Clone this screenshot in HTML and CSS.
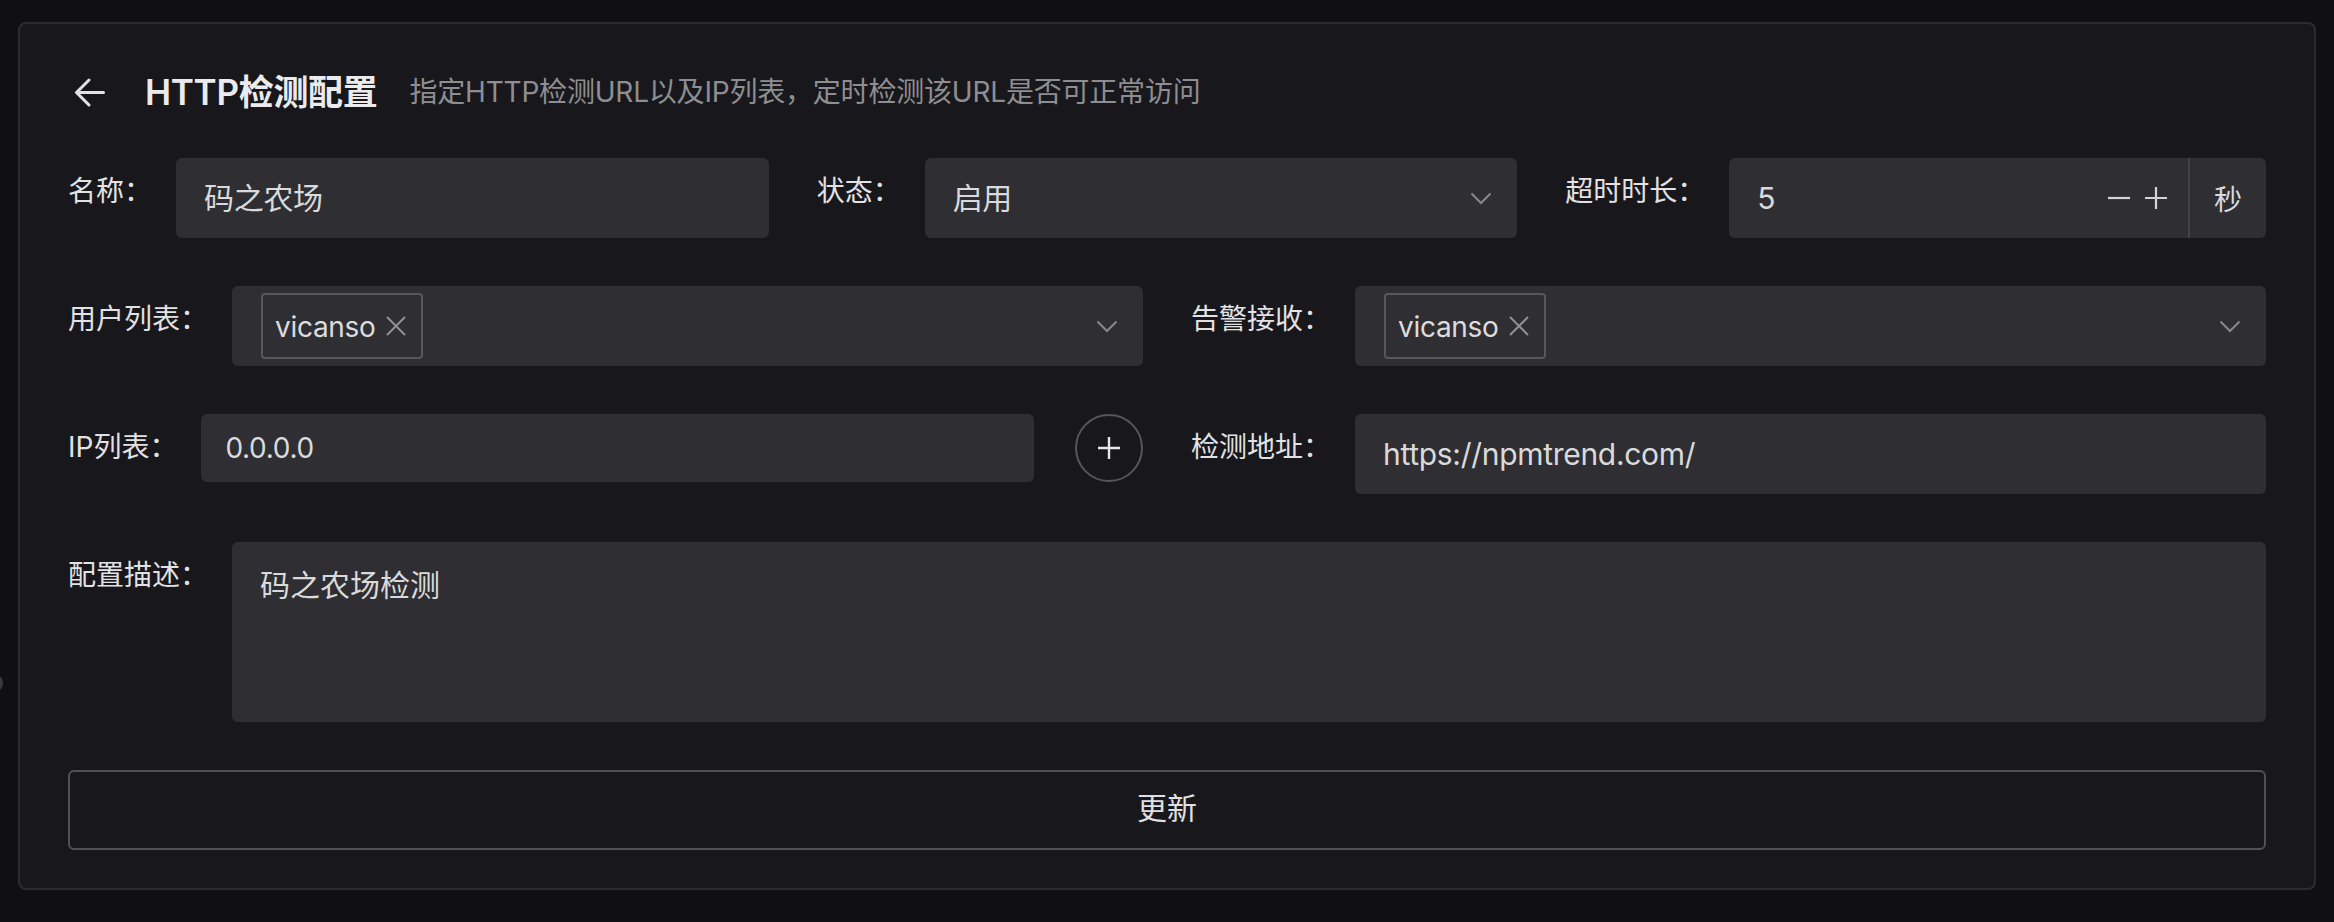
FILE: index.html
```html
<!DOCTYPE html>
<html lang="zh-CN">
<head>
<meta charset="utf-8">
<title>HTTP检测配置</title>
<link rel="stylesheet" href="styles.css">
</head>
<body>
<div class="page">
  <span class="edge-handle"></span>
  <section class="card">
    <header class="page-header">
      <span class="back">
        <svg width="31" height="29" viewBox="0 0 31 29"><path d="M29.5 14.5H2.5M15 2L2.5 14.5L15 27" fill="none" stroke="#e2e2e4" stroke-width="3" stroke-linecap="round" stroke-linejoin="round"/></svg>
      </span>
      <h1 class="title">HTTP检测配置</h1>
      <p class="subtitle">指定HTTP检测URL以及IP列表，定时检测该URL是否可正常访问</p>
    </header>

    <form class="form">
      <div class="row cols-3">
        <div class="item">
          <label class="label">名称：</label>
          <div class="control"><div class="input">码之农场</div></div>
        </div>
        <div class="item">
          <label class="label">状态：</label>
          <div class="control">
            <div class="input select">
              <span class="value">启用</span>
              <svg class="chevron" width="22" height="13" viewBox="0 0 22 13"><polyline points="1.5,1.5 11,11 20.5,1.5" fill="none" stroke="#88888c" stroke-width="2"/></svg>
            </div>
          </div>
        </div>
        <div class="item">
          <label class="label">超时时长：</label>
          <div class="control">
            <div class="input number">
              <span class="value">5</span>
              <span class="stepper">
                <svg width="22" height="22" viewBox="0 0 22 22"><path d="M0 11H22" stroke="#d4d4d6" stroke-width="2.2"/></svg>
                <svg width="22" height="22" viewBox="0 0 22 22"><path d="M0 11H22M11 0V22" stroke="#d4d4d6" stroke-width="2.2"/></svg>
              </span>
            </div>
            <div class="suffix">秒</div>
          </div>
        </div>
      </div>

      <div class="row cols-2">
        <div class="item">
          <label class="label">用户列表：</label>
          <div class="control">
            <div class="input select multi">
              <span class="tag">vicanso
                <svg width="20" height="20" viewBox="0 0 20 20"><path d="M1 1L19 19M19 1L1 19" stroke="#909094" stroke-width="2"/></svg>
              </span>
              <svg class="chevron" width="22" height="13" viewBox="0 0 22 13"><polyline points="1.5,1.5 11,11 20.5,1.5" fill="none" stroke="#88888c" stroke-width="2"/></svg>
            </div>
          </div>
        </div>
        <div class="item">
          <label class="label">告警接收：</label>
          <div class="control">
            <div class="input select multi">
              <span class="tag">vicanso
                <svg width="20" height="20" viewBox="0 0 20 20"><path d="M1 1L19 19M19 1L1 19" stroke="#909094" stroke-width="2"/></svg>
              </span>
              <svg class="chevron" width="22" height="13" viewBox="0 0 22 13"><polyline points="1.5,1.5 11,11 20.5,1.5" fill="none" stroke="#88888c" stroke-width="2"/></svg>
            </div>
          </div>
        </div>
      </div>

      <div class="row cols-2">
        <div class="item">
          <label class="label">IP列表：</label>
          <div class="control">
            <div class="input small">0.0.0.0</div>
            <span class="circle-btn">
              <svg width="22" height="22" viewBox="0 0 22 22"><path d="M0 11H22M11 0V22" stroke="#e6e6e8" stroke-width="2.4"/></svg>
            </span>
          </div>
        </div>
        <div class="item">
          <label class="label">检测地址：</label>
          <div class="control"><div class="input">https://npmtrend.com/</div></div>
        </div>
      </div>

      <div class="row cols-1">
        <div class="item">
          <label class="label">配置描述：</label>
          <div class="control"><div class="textarea">码之农场检测</div></div>
        </div>
      </div>

      <button type="button" class="submit">更新</button>
    </form>
  </section>
</div>
</body>
</html>
```

FILE: styles.css
```css
* {
  box-sizing: border-box;
}

html, body {
  margin: 0;
  background: #101014;
}

body {
  font-family: "Inter", "Noto Sans CJK SC", sans-serif;
  color: #dcdcde;
}

.page {
  position: relative;
  padding: 22px 18px 32px 18px;
}

.edge-handle {
  position: absolute;
  left: -17px;
  top: 673px;
  width: 20px;
  height: 20px;
  border-radius: 50%;
  background: #3a3a3e;
}

.card {
  background: #18181c;
  border: 2px solid #2c2c30;
  border-radius: 8px;
  padding: 40px 48px 38px 48px;
}

/* header */
.page-header {
  display: flex;
  align-items: center;
  height: 56px;
  margin-bottom: 38px;
}

.back {
  flex: none;
  width: 77px;
  padding-left: 6px;
  display: flex;
  align-items: center;
}

.title {
  margin: 0;
  font-size: 35px;
  line-height: 56px;
  font-weight: 600;
  letter-spacing: -0.3px;
  color: #ebebed;
  white-space: nowrap;
}

.subtitle {
  margin: 0 0 0 32px;
  font-size: 28px;
  line-height: 56px;
  letter-spacing: -0.2px;
  color: #8e8e92;
  white-space: nowrap;
}

/* form */
.row {
  display: grid;
  column-gap: 48px;
  margin-bottom: 48px;
}

.cols-3 { grid-template-columns: repeat(3, 1fr); }
.cols-2 { grid-template-columns: repeat(2, 1fr); }
.cols-1 { grid-template-columns: 1fr; }

.item {
  display: flex;
  align-items: flex-start;
  min-width: 0;
}

.label {
  flex: none;
  font-size: 28px;
  line-height: 66px;
  padding-right: 24px;
  color: #e2e2e4;
  white-space: nowrap;
}

.control {
  flex: 1;
  min-width: 0;
  display: flex;
  align-items: flex-start;
}

.input {
  flex: 1;
  min-width: 0;
  height: 80px;
  display: flex;
  align-items: center;
  padding: 0 28px;
  background: #2f2f33;
  border-radius: 6px;
  font-size: 30px;
  line-height: 40px;
  letter-spacing: -0.3px;
  color: #dadadc;
  white-space: nowrap;
}

.input.small {
  height: 68px;
  padding: 0 24px;
  font-size: 28px;
}

.select {
  justify-content: space-between;
  padding-right: 25px;
}

.select.multi {
  padding-left: 29px;
}

.chevron {
  flex: none;
}

.tag {
  display: inline-flex;
  align-items: center;
  gap: 10px;
  height: 66px;
  padding: 2px 15px 0 12px;
  border: 2px solid #58585c;
  border-radius: 4px;
  font-size: 28px;
  letter-spacing: -0.3px;
  color: #dcdcde;
}

.tag svg {
  margin-top: -2px;
}

.number {
  justify-content: space-between;
  border-radius: 6px 0 0 6px;
  padding-right: 21px;
}

.stepper {
  display: flex;
  gap: 15px;
  align-items: center;
}

.suffix {
  flex: none;
  width: 78px;
  height: 80px;
  display: flex;
  align-items: center;
  justify-content: center;
  background: #2f2f33;
  border-left: 2px solid #434347;
  border-radius: 0 6px 6px 0;
  font-size: 28px;
  color: #dadadc;
}

.circle-btn {
  flex: none;
  width: 68px;
  height: 68px;
  margin-left: 41px;
  border: 2px solid #55555a;
  border-radius: 50%;
  display: flex;
  align-items: center;
  justify-content: center;
}

.textarea {
  flex: 1;
  height: 180px;
  padding: 24px 28px;
  background: #2f2f33;
  border-radius: 6px;
  font-size: 30px;
  line-height: 38px;
  color: #dadadc;
}

.submit {
  display: block;
  width: 100%;
  height: 80px;
  margin: 0;
  padding: 0 0 4px 0;
  background: transparent;
  border: 2px solid #505055;
  border-radius: 6px;
  font-family: "Inter", "Noto Sans CJK SC", sans-serif;
  font-size: 30px;
  line-height: 40px;
  color: #e0e0e2;
}
```
